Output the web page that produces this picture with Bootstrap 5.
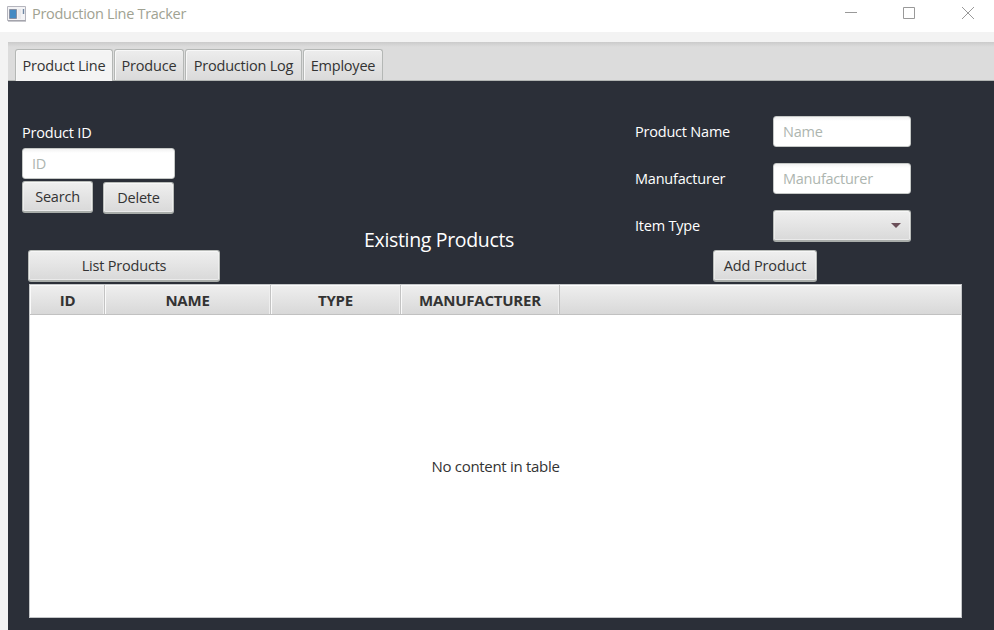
<!DOCTYPE html>
<html lang="en">
<head>
<meta charset="utf-8">
<meta name="viewport" content="width=device-width, initial-scale=1">
<title>Production Line Tracker</title>
<link href="https://cdn.jsdelivr.net/npm/bootstrap@5.3.0/dist/css/bootstrap.min.css" rel="stylesheet">
<style>
  html, body { height: 100%; }
  body { font-family: "Open Sans", "Noto Sans", sans-serif; font-size: 14.5px; line-height: 20px; letter-spacing: -.21px; color: #333; background: #f3f3f3; overflow: hidden; }
  .title-bar { height: 32px; background: #fff; color: #a0a292; padding: 0 20px 5px 7px; }
  .title-bar h1 { font-size: 14.5px; line-height: 20px; font-weight: 400; letter-spacing: -.3px; margin: 0 0 0 6px; }
  .window-actions { gap: 46px; margin-bottom: 2px; }
  .window-actions svg:last-child { margin-left: 1px; }
  .window-body { margin: 10px 0 0 8px; height: 588px; }
  .tab-strip { height: 39px; padding: 7px 7px 0; background: linear-gradient(#cbcbcb, #dcdcdc 5px); border: 0; border-bottom: 1px solid #b2b5b3; flex-wrap: nowrap; gap: 1px; }
  .tab-strip .nav-link { height: 31px; padding: 6px 0 0; text-align: center; color: #333; border: 1px solid #b4b7b5; border-bottom: 0; border-radius: 3px 3px 0 0; margin: 0; background: linear-gradient(#ededed, #dadada); box-shadow: inset 1px 1px #f8f8f8; white-space: nowrap; }
  .tab-strip .nav-link.active { height: 32px; background: #f4f4f4; color: #333; border-color: #b4b7b5; }
  .tab-line { width: 98px; } .tab-produce { width: 70px; } .tab-log { width: 117px; } .tab-employee { width: 80px; }
  .pane { background: #2b2f38; height: 549px; color: #fff; }
  .forms { height: 203px; padding-left: 14px; }
  .search-col { width: 342px; padding-top: 42px; }
  .heading-col { width: 271px; padding-top: 145px; }
  .heading-col h2 { font-size: 19.5px; line-height: 28px; font-weight: 400; letter-spacing: -.33px; margin: 0; }
  .entry-col { padding-top: 35px; }
  .fx-input { height: 31px; padding: 0 9px; border: 1px solid #c5c8c6; border-radius: 3px; font-size: 14.5px; letter-spacing: -.25px; background: linear-gradient(#f2f2f2, #fff 4px); }
  .fx-input::placeholder { color: #adb5af; opacity: 1; }
  .fx-btn { height: 32px; padding: 0; font-size: 14.5px; line-height: 20px; letter-spacing: -.2px; color: #333; border: 1px solid #b9bcb9; border-bottom: 2px solid #a9adaa; border-radius: 3px; background: linear-gradient(#efefef, #d9d9d9); box-shadow: inset 0 0 0 1px #f3f3f3aa, inset 0 1px #fff; }
  .id-input { width: 153px; margin: 5px 0 2px; }
  .btn-find { width: 71px; }
  .btn-remove { width: 71px; margin: 1px 0 0 10px; }
  .btn-list { width: 192px; margin: 36px 0 0 6px; }
  .entry-grid { display: grid; grid-template-columns: 138px 138px; row-gap: 16px; align-items: center; }
  .type-select { height: 32px; width: 138px; padding: 0 9px; }
  .btn-new { width: 104px; margin: 8px 0 0 78px; letter-spacing: -.12px; }
  .product-table { width: 933px; height: 334px; margin-left: 21px; background: #fff; color: #333; border: 1px solid #c4c6c8; }
  .table-head { height: 30px; background: linear-gradient(#efefef, #d8d8d8); border-bottom: 1px solid #c1c1c1; box-shadow: inset 0 1px #fff; font-size: 15px; font-weight: 700; text-align: center; line-height: 31px; letter-spacing: -.22px; }
  .table-head > div { border-right: 1px solid #c3c3c3; box-shadow: inset 1px 1px #fafafa, inset -1px 0 #eee; }
  .c-id { width: 75px; padding-left: 1px; } .c-name { width: 166px; } .c-type { width: 130px; } .c-maker { width: 159px; }
  .empty-note { font-size: 15px; letter-spacing: -.3px; }
</style>
<script src="https://cdn.jsdelivr.net/npm/bootstrap@5.3.0/dist/js/bootstrap.bundle.min.js"></script>
</head>
<body>
<header class="title-bar d-flex align-items-center">
  <svg width="19" height="16" viewBox="0 0 19 16" aria-hidden="true"><path fill="#f3f3f5" stroke="#b5b5bd" d="M.5 .5h18v14H.5z"/><path stroke="#92929b" d="M1 15h18"/><path fill="#438ac3" stroke="#807d89" stroke-width=".7" d="M2.5 3.5h7v9h-7z"/><path fill="#e9e9ec" d="M11 3h3v10h-3z"/><path fill="#7088a4" d="M15.8 3h1.4v5h-1.4z"/></svg>
  <h1>Production Line Tracker</h1>
  <div class="window-actions d-flex ms-auto">
    <svg width="12" height="12" viewBox="0 0 12 12" aria-hidden="true"><path stroke="#999" d="M0 5.5h12"/></svg>
    <svg width="12" height="12" viewBox="0 0 12 12" aria-hidden="true"><path fill="none" stroke="#999" d="M.5 .5h11v11H.5z"/></svg>
    <svg width="12" height="12" viewBox="0 0 12 12" aria-hidden="true"><path stroke="#999" d="M0 0l12 12M12 0L0 12"/></svg>
  </div>
</header>
<main class="window-body">
  <ul class="nav nav-tabs tab-strip">
    <li class="nav-item"><a class="nav-link active tab-line" href="#">Product Line</a></li>
    <li class="nav-item"><a class="nav-link tab-produce" href="#">Produce</a></li>
    <li class="nav-item"><a class="nav-link tab-log" href="#">Production Log</a></li>
    <li class="nav-item"><a class="nav-link tab-employee" href="#">Employee</a></li>
  </ul>
  <section class="pane">
    <div class="forms d-flex">
      <div class="search-col">
        <label class="d-block" for="pid">Product ID</label>
        <input id="pid" class="form-control fx-input id-input" placeholder="ID">
        <div class="d-flex align-items-start">
          <button class="btn fx-btn btn-find">Search</button>
          <button class="btn fx-btn btn-remove">Delete</button>
        </div>
        <button class="btn fx-btn btn-list d-block">List Products</button>
      </div>
      <div class="heading-col"><h2>Existing Products</h2></div>
      <div class="entry-col">
        <div class="entry-grid">
          <label for="pname">Product Name</label>
          <input id="pname" class="form-control fx-input" placeholder="Name">
          <label for="maker">Manufacturer</label>
          <input id="maker" class="form-control fx-input" placeholder="Manufacturer">
          <span>Item Type</span>
          <button class="btn fx-btn type-select d-flex align-items-center justify-content-end" aria-label="Item Type"><svg width="10" height="5" viewBox="0 0 10 5" aria-hidden="true"><path fill="#6b4f59" d="M0 0h10L5 5z"/></svg></button>
        </div>
        <button class="btn fx-btn btn-new d-block">Add Product</button>
      </div>
    </div>
    <div class="product-table d-flex flex-column">
      <div class="table-head d-flex">
        <div class="c-id">ID</div><div class="c-name">NAME</div><div class="c-type">TYPE</div><div class="c-maker">MANUFACTURER</div>
      </div>
      <div class="empty-note flex-grow-1 d-flex align-items-center justify-content-center">No content in table</div>
    </div>
  </section>
</main>
</body>
</html>
